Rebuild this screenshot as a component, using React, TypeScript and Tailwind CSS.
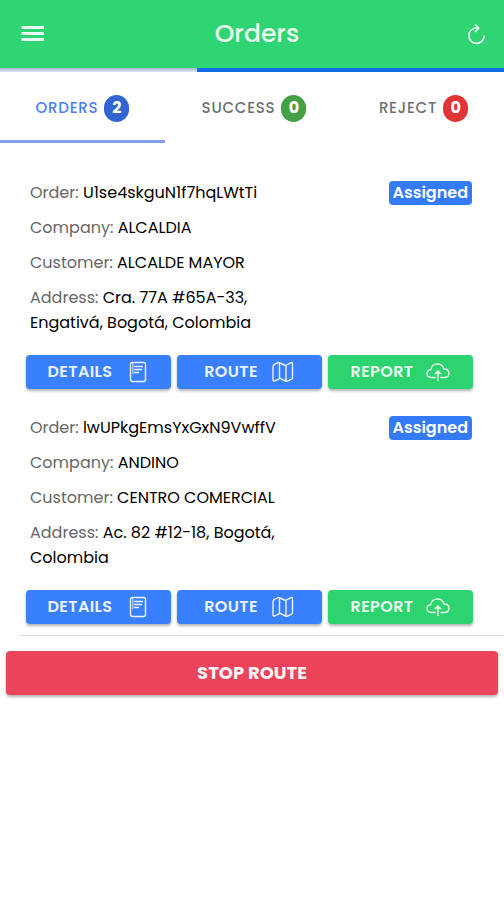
import type { ReactNode } from 'react';

type Order = { id: string; company: string; customer: string; address: string };

const orders: Order[] = [
  { id: 'U1se4skguN1f7hqLWtTi', company: 'ALCALDIA', customer: 'ALCALDE MAYOR', address: 'Cra. 77A #65A-33, Engativá, Bogotá, Colombia' },
  { id: 'lwUPkgEmsYxGxN9VwffV', company: 'ANDINO', customer: 'CENTRO COMERCIAL', address: 'Ac. 82 #12-18, Bogotá, Colombia' },
];

const tabs = [
  { label: 'ORDERS', count: 2, badge: 'bg-[#3265d2]', style: 'text-[#4a80f5] border-[#809ff0]', active: true },
  { label: 'SUCCESS', count: 0, badge: 'bg-[#43a047]', style: 'text-[#707070] border-transparent', active: false },
  { label: 'REJECT', count: 0, badge: 'bg-[#df3635]', style: 'text-[#707070] border-transparent', active: false },
];

function Icon({ children }: { children: ReactNode }) {
  return (
    <svg aria-hidden="true" viewBox="0 0 24 24" className="size-6 shrink-0" fill="none" stroke="currentColor" strokeWidth="1.4" strokeLinecap="round" strokeLinejoin="round">
      {children}
    </svg>
  );
}

function PaperIcon() {
  return (
    <Icon>
      <path d="M6.500 2.500H18Q19.500 2.500 19.500 4V19.500Q19.500 21.500 17.500 21.500H6.500Q4.500 21.500 4.500 19.500V4.500Q4.500 2.500 6.500 2.500Z" />
      <path d="M6.800 3V14" strokeWidth="0.8" />
      <path d="M8.500 6.500H16.500M8.500 9.500H15.500M8.500 12.500H12.500" />
    </Icon>
  );
}

function MapIcon() {
  return (
    <Icon>
      <path d="M2 6.500Q2 5 3.500 4.300L7 2.600Q8 2.300 9 3L14.500 5.500L19.500 2.800Q21.500 2 21.500 4V17.500Q21.500 18.800 20.200 19.400L16.500 21.200Q15.500 21.600 14.500 21L9 18.300L4 20.900Q2 21.500 2 19.500Z" />
      <path d="M8.500 3V18M15 6V21" />
    </Icon>
  );
}

function CloudUploadIcon() {
  return (
    <Icon>
      <path d="M9 17.500H5.500C3 17.500 1 16 1 13.500C1 11.300 2.700 9.900 4.800 9.700C5.100 6.200 8 4 11.300 4C14.600 4 17.100 6 17.800 9C20.800 9 23 10.700 23 13.300C23 16 21 17.500 18.500 17.500H15" />
      <path d="M12 20.500V12" />
      <path d="M8.800 13.500L12 10.300L15.200 13.500Z" fill="currentColor" strokeWidth="0.6" />
    </Icon>
  );
}

function Field({ label, value }: { label: string; value: string }) {
  return (
    <div>
      <dt className="inline text-[#666666]">{label}: </dt>
      <dd className="inline text-black">{value}</dd>
    </div>
  );
}

function ActionButton({ label, color, icon }: { label: string; color: string; icon: ReactNode }) {
  return (
    <button type="button" className={`flex h-[34px] items-center justify-center gap-[13px] rounded text-base font-semibold tracking-wide text-white/90 shadow-[0_2px_3px_rgba(0,0,0,0.3)] ${color}`}>
      {label}
      {icon}
    </button>
  );
}

function OrderCard({ order }: { order: Order }) {
  return (
    <article className="pr-[31px] pl-[26px]">
      <div className="flex items-start justify-between pr-px pl-1">
        <dl className="flex w-[256px] flex-col gap-[10px] text-base leading-[25px]">
          <Field label="Order" value={order.id} />
          <Field label="Company" value={order.company} />
          <Field label="Customer" value={order.customer} />
          <Field label="Address" value={order.address} />
        </dl>
        <span className="mt-px rounded bg-[#347bfa] px-1 text-base leading-6 font-semibold text-white">Assigned</span>
      </div>
      <div className="mt-5 grid grid-cols-3 gap-[6px]">
        <ActionButton label="DETAILS" color="bg-[#3880ff]" icon={<PaperIcon />} />
        <ActionButton label="ROUTE" color="bg-[#3880ff]" icon={<MapIcon />} />
        <ActionButton label="REPORT" color="bg-[#2dd36f]" icon={<CloudUploadIcon />} />
      </div>
    </article>
  );
}

export default function App() {
  return (
    <div className="min-h-screen bg-white font-[Poppins,Inter,sans-serif]">
      <header className="grid h-[68px] grid-cols-[1fr_auto_1fr] items-center bg-[#2fd573] px-[18px] text-white/90">
        <button type="button" aria-label="Menu" className="size-[30px] justify-self-start">
          <svg viewBox="0 0 30 30" className="size-[30px]" fill="none" stroke="currentColor" strokeWidth="3">
            <path d="M3.500 8.500H26M3.500 14.500H26M3.500 20.500H26" />
          </svg>
        </button>
        <h1 className="pl-[10px] text-[25px] font-medium">Orders</h1>
        <button type="button" aria-label="Refresh" className="size-5 justify-self-end">
          <svg viewBox="0 0 20 22" className="h-[22px] w-5" fill="none" stroke="currentColor" strokeWidth="1.700">
            <path d="M12 4H10.500A7.700 7.700 0 1 0 18.200 11.700" />
            <path d="M9 0.500L12.700 4.200L9 8" />
          </svg>
        </button>
      </header>
      <div className="h-1 bg-linear-to-b from-[#a7b6d0] to-[#dce5f6]">
        <div className="ml-[39%] h-full bg-[#126be5]" />
      </div>
      <nav aria-label="Order status" className="grid grid-cols-[165fr_178fr_161fr]">
        {tabs.map((tab) => (
          <button key={tab.label} type="button" aria-pressed={tab.active} className={`flex h-[71px] items-center justify-center gap-[6px] border-b-3 pt-1 text-[15px] font-medium tracking-wider ${tab.style}`}>
            {tab.label}
            <span className={`flex h-[27px] w-[25px] items-center justify-center rounded-full text-base font-bold tracking-normal text-white ${tab.badge}`}>{tab.count}</span>
          </button>
        ))}
      </nav>
      <main className="pt-[37px]">
        <div className="flex flex-col gap-[26px]">
          {orders.map((order) => (
            <OrderCard key={order.id} order={order} />
          ))}
        </div>
        <hr className="mt-[11px] ml-[18px] border-[#dedede]" />
        <div className="px-[6px] pt-[15px]">
          <button type="button" className="h-11 w-full rounded bg-[#eb445a] text-lg font-bold text-white/95 shadow-[0_2px_3px_rgba(0,0,0,0.3)]">STOP ROUTE</button>
        </div>
      </main>
    </div>
  );
}
